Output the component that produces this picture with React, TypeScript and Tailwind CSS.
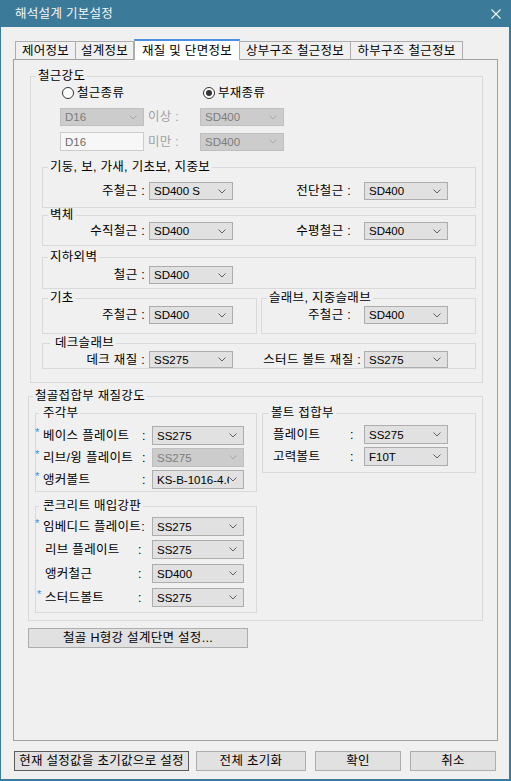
import React from "react";

function Chevron({ disabled = false }: { disabled?: boolean }) {
  return (
    <svg width="8" height="5" viewBox="0 0 8 5" className="shrink-0">
      <polyline
        points="0.5,0.5 4,4 7.5,0.5"
        fill="none"
        stroke={disabled ? "#a9a9a9" : "#606060"}
        strokeWidth="1"
      />
    </svg>
  );
}

function Combo({
  value,
  cls = "w-[84px] h-[18px]",
  disabled = false,
}: {
  value: string;
  cls?: string;
  disabled?: boolean;
}) {
  return (
    <div
      className={`${cls} shrink-0 flex items-center border pl-[4px] pr-[6px] text-[11.5px] tracking-normal ${
        disabled
          ? "bg-[#cccccc] border-[#bfbfbf] text-[#7d7d7d]"
          : "bg-[#e1e1e1] border-[#adadad] text-black"
      }`}
    >
      <span className="flex-1 min-w-0 overflow-hidden whitespace-nowrap">{value}</span>
      <Chevron disabled={disabled} />
    </div>
  );
}

function Radio({ checked = false }: { checked?: boolean }) {
  return (
    <span className="w-[12px] h-[12px] rounded-full border border-[#333333] bg-white flex items-center justify-center shrink-0">
      {checked && <span className="w-[6px] h-[6px] rounded-full bg-[#333333]" />}
    </span>
  );
}

function Group({
  title,
  cls,
  legendCls = "ml-[5px] px-[2px]",
  children,
}: {
  title: string;
  cls: string;
  legendCls?: string;
  children?: React.ReactNode;
}) {
  return (
    <fieldset className={`${cls} border border-[#d9d9d9] min-w-0 shrink-0`}>
      <legend className={`${legendCls} leading-[14px] whitespace-nowrap`}>{title}</legend>
      {children}
    </fieldset>
  );
}

function Star() {
  return (
    <span className="self-start pt-[1px] text-[#2b8fea] text-[11px] leading-[11px]">*</span>
  );
}

export default function App() {
  return (
    <div className="w-[511px] h-[781px] bg-[#3c7a99] flex flex-col text-[12.5px] tracking-[0.3px] leading-[14px] text-black font-['Liberation_Sans','Noto_Sans_CJK_KR',sans-serif] overflow-hidden">
      {/* Title bar */}
      <div className="h-[27px] shrink-0 flex items-center justify-between pl-[15px] pr-[10px] text-[#f4f7f9]">
        <span>해석설계 기본설정</span>
        <svg width="10" height="10" viewBox="0 0 10 10">
          <path d="M0.5 0.5 L9.5 9.5 M9.5 0.5 L0.5 9.5" stroke="#f4f7f9" strokeWidth="1.1" fill="none" />
        </svg>
      </div>

      {/* Body */}
      <div className="ml-[1px] mr-[2px] h-[752px] bg-[#f0f0f0] flex flex-col">
        {/* Tabs */}
        <div className="mt-[12px] ml-[14px] h-[20px] flex items-end">
          <div className="w-[61px] h-[18px] border border-b-0 border-[#adadad] bg-[#f0f0f0] flex items-center justify-center">
            제어정보
          </div>
          <div className="w-[58px] h-[18px] border border-b-0 border-l-0 border-[#adadad] bg-[#f0f0f0] flex items-center justify-center">
            설계정보
          </div>
          <div className="relative z-10 -mb-px w-[106px] h-[21px] bg-white border-x border-[#adadad] border-t-2 border-t-[#4a90e2] flex items-center justify-center whitespace-nowrap">
            재질 및 단면정보
          </div>
          <div className="w-[111px] h-[18px] border border-b-0 border-l-0 border-[#adadad] bg-[#f0f0f0] flex items-center justify-center whitespace-nowrap">
            상부구조 철근정보
          </div>
          <div className="w-[112px] h-[18px] border border-b-0 border-l-0 border-[#adadad] bg-[#f0f0f0] flex items-center justify-center whitespace-nowrap">
            하부구조 철근정보
          </div>
        </div>

        {/* Tab panel */}
        <div className="ml-[12px] w-[485px] h-[682px] border border-[#a0a0a0] bg-[#f0f0f0] flex flex-col items-start">
          {/* 철근강도 */}
          <Group title="철근강도" cls="ml-[16px] mt-[9px] w-[453px] h-[314px]">
            <div className="flex items-center mt-[3px] ml-[31px] h-[14px]">
              <div className="w-[141px] flex items-center">
                <Radio />
                <span className="ml-[3px]">철근종류</span>
              </div>
              <div className="flex items-center">
                <Radio checked />
                <span className="ml-[3px]">부재종류</span>
              </div>
            </div>
            <div className="flex items-center mt-[8px] ml-[29px]">
              <Combo value="D16" disabled />
              <div className="w-[56px] pl-[4px] text-[#a0a0a0]">이상 :</div>
              <Combo value="SD400" disabled />
            </div>
            <div className="flex items-center mt-[6px] ml-[29px]">
              <div className="w-[84px] h-[19px] border border-[#cccccc] bg-[#f7f7f7] pl-[4px] flex items-center text-[#6d6d6d] text-[11.5px] tracking-normal">
                D16
              </div>
              <div className="w-[56px] pl-[4px] text-[#a0a0a0]">미만 :</div>
              <Combo value="SD400" disabled />
            </div>

            <Group title="기둥, 보, 가새, 기초보, 지중보" cls="ml-[11px] mt-[9px] w-[434px] h-[48px]">
              <div className="flex items-center mt-[8px]">
                <div className="w-[106px] text-right pr-[4px]">주철근 :</div>
                <Combo value="SD400 S" />
                <div className="w-[131px] text-right pr-[13px]">전단철근 :</div>
                <Combo value="SD400" />
              </div>
            </Group>

            <Group title="벽체" cls="ml-[11px] w-[434px] h-[38px]">
              <div className="flex items-center">
                <div className="w-[106px] text-right pr-[4px]">수직철근 :</div>
                <Combo value="SD400" />
                <div className="w-[131px] text-right pr-[13px]">수평철근 :</div>
                <Combo value="SD400" />
              </div>
            </Group>

            <Group title="지하외벽" cls="ml-[11px] mt-[4px] w-[434px] h-[39px]">
              <div className="flex items-center mt-[2px]">
                <div className="w-[106px] text-right pr-[4px]">철근 :</div>
                <Combo value="SD400" />
              </div>
            </Group>

            <div className="flex mt-[2px] ml-[11px]">
              <Group title="기초" cls="w-[215px] h-[43px]">
                <div className="flex items-center mt-[1px]">
                  <div className="w-[106px] text-right pr-[4px]">주철근 :</div>
                  <Combo value="SD400" />
                </div>
              </Group>
              <Group title="슬래브, 지중슬래브" cls="ml-[4px] w-[215px] h-[43px]">
                <div className="flex items-center mt-[1px]">
                  <div className="w-[102px] text-right pr-[13px]">주철근 :</div>
                  <Combo value="SD400" />
                </div>
              </Group>
            </div>

            <Group title="데크슬래브" cls="ml-[11px] mt-[2px] w-[434px] h-[33px]" legendCls="ml-[7px] pl-[5px] pr-[2px]">
              <div className="flex items-center mt-[1px]">
                <div className="w-[106px] text-right pr-[4px]">데크 재질 :</div>
                <Combo value="SS275" cls="w-[84px] h-[17px]" />
                <div className="w-[131px] text-right pr-[3px] whitespace-nowrap">스터드 볼트 재질 :</div>
                <Combo value="SS275" cls="w-[84px] h-[17px]" />
              </div>
            </Group>
          </Group>

          {/* 철골접합부 재질강도 */}
          <Group title="철골접합부 재질강도" cls="ml-[14px] mt-[6px] w-[455px] h-[232px]" legendCls="ml-[4px] px-[2px]">
            <div className="flex items-start mt-[3px] ml-[6px]">
              <Group title="주각부" cls="w-[222px] h-[86px]" legendCls="ml-[3px] pl-[4px] pr-[2px]">
                <div className="flex items-center -ml-[1px] mt-[6px] h-[19px]">
                  <span className="w-[8px] self-stretch flex"><Star /></span>
                  <span className="w-[99px] whitespace-nowrap">베이스 플레이트</span>
                  <span className="w-[10px]">:</span>
                  <Combo value="SS275" cls="w-[92px] h-[19px]" />
                </div>
                <div className="flex items-center -ml-[1px] mt-[3px] h-[19px]">
                  <span className="w-[8px] self-stretch flex"><Star /></span>
                  <span className="w-[99px] whitespace-nowrap">리브/윙 플레이트</span>
                  <span className="w-[10px]">:</span>
                  <Combo value="SS275" cls="w-[92px] h-[19px]" disabled />
                </div>
                <div className="flex items-center -ml-[1px] mt-[3px] h-[19px]">
                  <span className="w-[8px] self-stretch flex"><Star /></span>
                  <span className="w-[99px] whitespace-nowrap">앵커볼트</span>
                  <span className="w-[10px]">:</span>
                  <Combo value="KS-B-1016-4.6" cls="w-[92px] h-[19px]" />
                </div>
              </Group>

              <Group title="볼트 접합부" cls="ml-[5px] w-[214px] h-[67px]" legendCls="ml-[6px] px-[2px]">
                <div className="flex items-center mt-[5px] h-[19px]">
                  <span className="w-[87px] pl-[10px]">플레이트</span>
                  <span className="w-[14px]">:</span>
                  <Combo value="SS275" cls="w-[84px] h-[19px]" />
                </div>
                <div className="flex items-center mt-[3px] h-[19px]">
                  <span className="w-[87px] pl-[10px]">고력볼트</span>
                  <span className="w-[14px]">:</span>
                  <Combo value="F10T" cls="w-[84px] h-[19px]" />
                </div>
              </Group>
            </div>

            <Group title="콘크리트 매입강판" cls="ml-[6px] mt-[7px] w-[222px] h-[114px]" legendCls="ml-[3px] pl-[4px] pr-[2px]">
              <div className="flex items-center -ml-[1px] mt-[4px] h-[19px]">
                <span className="w-[8px] self-stretch flex"><Star /></span>
                <span className="w-[109px] whitespace-nowrap">임베디드 플레이트:</span>
                <Combo value="SS275" cls="w-[92px] h-[19px]" />
              </div>
              <div className="flex items-center -ml-[1px] mt-[4px] h-[19px]">
                <span className="w-[10px]" />
                <span className="w-[93px] whitespace-nowrap">리브 플레이트</span>
                <span className="w-[14px]">:</span>
                <Combo value="SS275" cls="w-[92px] h-[19px]" />
              </div>
              <div className="flex items-center -ml-[1px] mt-[5px] h-[19px]">
                <span className="w-[10px]" />
                <span className="w-[93px] whitespace-nowrap">앵커철근</span>
                <span className="w-[14px]">:</span>
                <Combo value="SD400" cls="w-[92px] h-[19px]" />
              </div>
              <div className="flex items-center -ml-[1px] mt-[5px] h-[19px]">
                <span className="w-[10px] pl-[2px] self-stretch flex"><Star /></span>
                <span className="w-[93px] whitespace-nowrap">스터드볼트</span>
                <span className="w-[14px]">:</span>
                <Combo value="SS275" cls="w-[92px] h-[19px]" />
              </div>
            </Group>
          </Group>

          <button className="ml-[14px] mt-[7px] w-[220px] h-[20px] border border-[#adadad] bg-[#e1e1e1] flex items-center justify-center whitespace-nowrap">
            철골 H형강 설계단면 설정...
          </button>
        </div>

        {/* Bottom buttons */}
        <div className="mt-[10px] ml-[13px] flex items-center">
          <button className="w-[175px] h-[20px] border border-[#5c5c5c] bg-[#e1e1e1] flex items-center justify-center whitespace-nowrap">
            현재 설정값을 초기값으로 설정
          </button>
          <button className="ml-[7px] w-[110px] h-[20px] border border-[#adadad] bg-[#e1e1e1] flex items-center justify-center">
            전체 초기화
          </button>
          <button className="ml-[9px] w-[86px] h-[20px] border border-[#adadad] bg-[#e1e1e1] flex items-center justify-center">
            확인
          </button>
          <button className="ml-[9px] w-[86px] h-[20px] border border-[#adadad] bg-[#e1e1e1] flex items-center justify-center">
            취소
          </button>
        </div>
      </div>
    </div>
  );
}
